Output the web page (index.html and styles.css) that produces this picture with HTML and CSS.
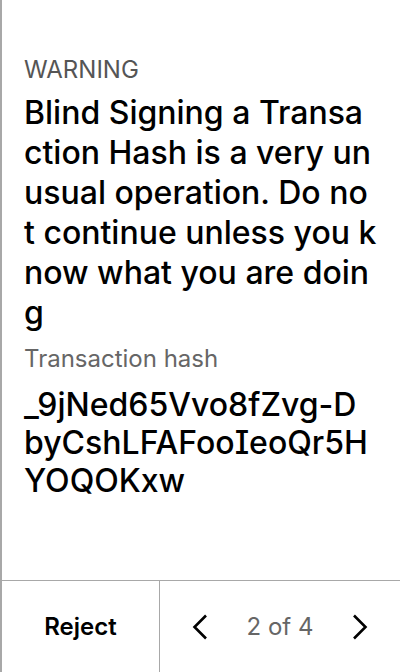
FILE: index.html
```html
<!DOCTYPE html>
<html>
<head>
<meta charset="utf-8">
<link rel="stylesheet" href="styles.css">
</head>
<body>
<div class="screen">
  <main class="content">
    <div class="label">WARNING</div>
    <div class="message">Blind Signing a Transa<br>ction Hash is a very un<br>usual operation. Do no<br>t continue unless you k<br>now what you are doin<br>g</div>
    <div class="sublabel">Transaction hash</div>
    <div class="hash">_9jNed65Vvo8fZvg-D<br>byCshLFAFooIeoQr5H<br>YOQOKxw</div>
  </main>
  <footer class="footer">
    <div class="reject">Reject</div>
    <div class="nav">
      <div class="arrow">
        <svg width="18" height="26" viewBox="0 0 18 26"><path d="M15 1.5 L3.5 13 L15 24.5" fill="none" stroke="#000" stroke-width="2.6"/></svg>
      </div>
      <div class="pages">2 of 4</div>
      <div class="arrow">
        <svg width="18" height="26" viewBox="0 0 18 26"><path d="M3 1.5 L14.5 13 L3 24.5" fill="none" stroke="#000" stroke-width="2.6"/></svg>
      </div>
    </div>
  </footer>
</div>
</body>
</html>
```
FILE: styles.css
```css
* { box-sizing: border-box; }
html, body { margin: 0; padding: 0; background: #fff; }
body { font-family: Inter, "Noto Sans", sans-serif; color: #000; }
.screen {
  width: 400px;
  height: 672px;
  border-left: 2px solid #a8a8a8;
  display: flex;
  flex-direction: column;
}
.content {
  flex: 1;
  padding: 54px 16px 0 22px;
}
.label {
  font-size: 24px;
  line-height: 32px;
  color: #555;
}
.message {
  margin-top: 7px;
  font-size: 32px;
  line-height: 40px;
  font-weight: 500;
  white-space: nowrap;
}
.sublabel {
  margin-top: 10px;
  font-size: 24px;
  line-height: 32px;
  color: #666;
}
.hash {
  margin-top: 11px;
  font-size: 32px;
  line-height: 38px;
  font-weight: 500;
  white-space: nowrap;
  font-feature-settings: "cv08";
}
.footer {
  height: 92px;
  border-top: 1px solid #a8a8a8;
  display: flex;
}
.reject {
  width: 158px;
  border-right: 1px solid #a8a8a8;
  display: flex;
  align-items: center;
  justify-content: center;
  font-size: 24px;
  font-weight: 600;
}
.nav {
  flex: 1;
  display: grid;
  grid-template-columns: 80px 1fr 80px;
  align-items: center;
}
.arrow { display: flex; justify-content: center; }
.pages {
  text-align: center;
  font-size: 24px;
  color: #666;
}
```
